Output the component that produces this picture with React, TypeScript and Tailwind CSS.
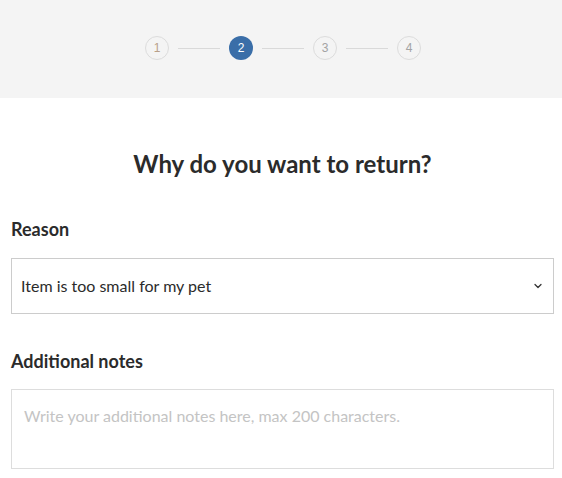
import { ChevronDown } from 'lucide-react'

const steps = [1, 2, 3, 4]

function Stepper({ current }: { current: number }) {
  return (
    <div className="ml-[4px] mb-[2px] flex items-center">
      {steps.map((n, i) => (
        <div key={n} className="flex items-center">
          {i > 0 && <div className="mx-[9px] h-px w-[42px] bg-[#d9d9d9]" />}
          <div
            className={
              n === current
                ? 'flex h-[24px] w-[24px] items-center justify-center rounded-full bg-[#3a6ea8] text-[12px] text-white'
                : n < current
                  ? 'flex h-[24px] w-[24px] items-center justify-center rounded-full border border-[#dcdcdc] text-[12px] text-[#b8a08a]'
                  : 'flex h-[24px] w-[24px] items-center justify-center rounded-full border border-[#dcdcdc] text-[12px] text-[#a3a3a3]'
            }
            style={{ fontFamily: 'Arial, "Liberation Sans", sans-serif' }}
          >
            {n}
          </div>
        </div>
      ))}
    </div>
  )
}

export default function App() {
  return (
    <div className="min-h-[478px] bg-white text-[#2b2b2b]" style={{ fontFamily: 'Lato, "Open Sans", sans-serif' }}>
      <div className="flex h-[98px] items-center justify-center bg-[#f4f4f4]">
        <Stepper current={2} />
      </div>

      <div className="pl-[11px] pr-[8px] pb-[10px]">
        <h1 className="mt-[50px] text-center text-[24px] font-bold leading-[32px]">
          Why do you want to return?
        </h1>

        <label className="mt-[37px] block text-[18px] font-bold leading-[24px]">Reason</label>
        <div className="mt-[17px] flex h-[56px] items-center justify-between border border-[#cccccc] pl-[9px] pr-[9px]">
          <span className="text-[16px]">Item is too small for my pet</span>
          <ChevronDown className="h-[12px] w-[12px] text-[#333]" strokeWidth={2.5} />
        </div>

        <label className="mt-[35px] block text-[18px] font-bold leading-[24px]">Additional notes</label>
        <textarea
          className="mt-[16px] block h-[80px] w-full resize-none border border-[#dddddd] px-[12px] py-[14px] text-[16px] outline-none placeholder:text-[#c4c4c4]"
          placeholder="Write your additional notes here, max 200 characters."
        />
      </div>
    </div>
  )
}
